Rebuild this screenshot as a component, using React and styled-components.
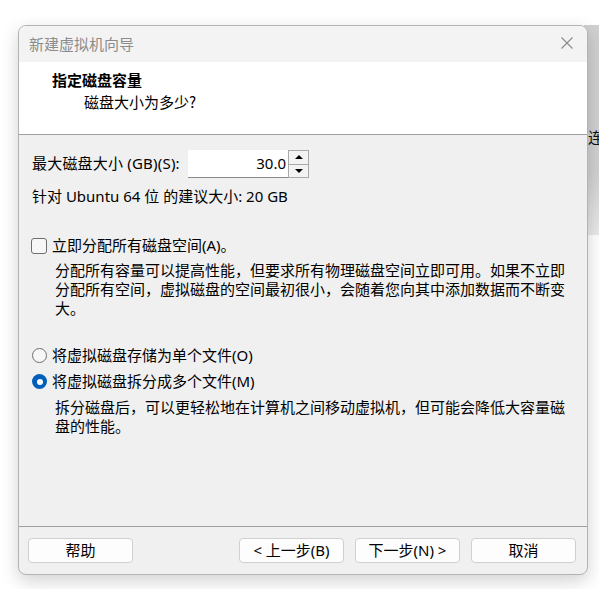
import React from 'react';
import styled, { createGlobalStyle } from 'styled-components';

const GlobalStyle = createGlobalStyle`
  html, body {
    margin: 0;
    padding: 0;
    background: #ffffff;
  }
  body {
    font-family: "Noto Sans", "Noto Sans CJK SC", sans-serif;
    font-size: 15px;
    color: #000;
  }
`;

const Desktop = styled.div`
  position: relative;
  box-sizing: border-box;
  width: 599px;
  height: 589px;
  padding: 25px 0 0 18px;
  overflow: hidden;
`;

const BackWindow = styled.div`
  position: absolute;
  left: 584px;
  top: 25px;
  width: 30px;
  height: 210px;
  background: linear-gradient(#d0d0d0 70%, #e9e9e9);
  font-family: "Noto Sans CJK SC", sans-serif;
  font-size: 15px;
  line-height: 19px;

  span {
    position: absolute;
    left: 4px;
    top: 102px;
    color: #111;
  }
`;

const Dialog = styled.div`
  position: relative;
  z-index: 1;
  box-sizing: border-box;
  width: 570px;
  height: 550px;
  display: flex;
  flex-direction: column;
  border: 1px solid #b3b3b3;
  border-radius: 8px;
  overflow: hidden;
  background: #f0f0f0;
  box-shadow: 0 6px 18px rgba(0, 0, 0, 0.18);
`;

const TitleBar = styled.div`
  height: 36px;
  flex: none;
  display: flex;
  align-items: center;
  justify-content: space-between;
  padding: 0 14px 2px 10px;
  box-sizing: border-box;
  background: #f3f3f3;
  color: #8c8c8c;
  font-family: "Noto Sans CJK SC", sans-serif;
  font-size: 15px;
  line-height: 19px;
`;

const CloseIcon = styled.svg`
  width: 12px;
  height: 12px;
  display: block;
`;

const Header = styled.div`
  height: 72px;
  flex: none;
  box-sizing: border-box;
  padding: 8px 0 0 33px;
  background: #ffffff;
  font-family: "Noto Sans CJK SC", sans-serif;
  line-height: 19px;
`;

const HeaderTitle = styled.div`
  font-weight: 700;
`;

const HeaderSub = styled.div`
  margin: 3px 0 0 32px;
`;

const Divider = styled.div`
  height: 1px;
  flex: none;
  background: #a0a0a0;
`;

const Body = styled.div`
  flex: 1;
  box-sizing: border-box;
  padding: 15px 0 0 12px;
  line-height: 19px;
`;

const SizeRow = styled.div`
  display: flex;
  align-items: center;
  height: 27px;
  padding-left: 1px;
`;

const SizeLabel = styled.span`
  width: 156px;
  letter-spacing: 0.2px;
`;

const Spinner = styled.div`
  display: flex;
  height: 27px;
`;

const SpinInput = styled.div`
  box-sizing: border-box;
  width: 100px;
  height: 28px;
  background: #ffffff;
  border-bottom: 1px solid #8a8a8a;
  padding-right: 2px;
  text-align: right;
  line-height: 27px;
`;

const SpinButtons = styled.div`
  display: flex;
  flex-direction: column;
  box-sizing: border-box;
  width: 21px;
  height: 28px;
  border: 1px solid #a9a9a9;
  background: #f0f0f0;
`;

const SpinButton = styled.div`
  flex: 1;
  display: flex;
  align-items: center;
  justify-content: center;
  border-top: ${p => (p.$bottom ? '1px solid #a9a9a9' : 'none')};
  background: #f3f3f3;

  &::after {
    content: "";
    width: 0;
    height: 0;
    border-left: 4px solid transparent;
    border-right: 4px solid transparent;
    ${p =>
      p.$bottom
        ? 'border-top: 4px solid #000;'
        : 'border-bottom: 4px solid #000;'}
  }
`;

const Hint = styled.div`
  margin: 10px 0 0 1px;
`;

const OptionRow = styled.label`
  display: flex;
  align-items: center;
  gap: 5px;
  margin-top: ${p => p.$top}px;
`;

const CheckBox = styled.span`
  box-sizing: border-box;
  width: 16px;
  height: 16px;
  border: 1px solid #6e6e6e;
  border-radius: 3px;
  background: #f7f7f7;
  flex: none;
`;

const Radio = styled.span`
  box-sizing: border-box;
  width: 15px;
  height: 15px;
  margin-left: 1px;
  border-radius: 50%;
  flex: none;
  display: flex;
  align-items: center;
  justify-content: center;
  border: ${p => (p.$checked ? '0' : '1px solid #6e6e6e')};
  background: ${p => (p.$checked ? '#005fb8' : '#f7f7f7')};

  &::after {
    content: "";
    display: ${p => (p.$checked ? 'block' : 'none')};
    width: 6px;
    height: 6px;
    border-radius: 50%;
    background: #ffffff;
  }
`;

const Note = styled.p`
  margin: ${p => p.$top}px 0 0 24px;
  width: 520px;
  font-family: "Noto Sans CJK SC", sans-serif;
  line-height: 19px;
`;

const Footer = styled.div`
  height: 47px;
  flex: none;
  display: flex;
  align-items: flex-start;
  box-sizing: border-box;
  padding: 11px 11px 0 9px;
`;

const Button = styled.button`
  box-sizing: border-box;
  width: 105px;
  height: 25px;
  margin-left: ${p => p.$gap || 0}px;
  padding: 0;
  border: 1px solid #d0d0d0;
  border-radius: 4px;
  background: #fdfdfd;
  color: #000;
  font-family: "Noto Sans", "Noto Sans CJK SC", sans-serif;
  font-size: 15px;
  line-height: 23px;
`;

const Spacer = styled.div`
  flex: 1;
`;

export default function App() {
  return (
    <>
      <GlobalStyle />
      <Desktop>
        <BackWindow>
          <span>连</span>
        </BackWindow>
        <Dialog>
          <TitleBar>
            <span>新建虚拟机向导</span>
            <CloseIcon viewBox="0 0 12 12">
              <path d="M0.5 0.5 L11.5 11.5 M11.5 0.5 L0.5 11.5" stroke="#8a8a8a" strokeWidth="1.1" fill="none" />
            </CloseIcon>
          </TitleBar>
          <Header>
            <HeaderTitle>指定磁盘容量</HeaderTitle>
            <HeaderSub>磁盘大小为多少?</HeaderSub>
          </Header>
          <Divider />
          <Body>
            <SizeRow>
              <SizeLabel>最大磁盘大小 (GB)(S):</SizeLabel>
              <Spinner>
                <SpinInput>30.0</SpinInput>
                <SpinButtons>
                  <SpinButton />
                  <SpinButton $bottom />
                </SpinButtons>
              </Spinner>
            </SizeRow>
            <Hint>针对 Ubuntu 64 位 的建议大小: 20 GB</Hint>

            <OptionRow $top={30}>
              <CheckBox />
              <span>立即分配所有磁盘空间(A)。</span>
            </OptionRow>
            <Note $top={5}>
              分配所有容量可以提高性能，但要求所有物理磁盘空间立即可用。如果不立即分配所有空间，虚拟磁盘的空间最初很小，会随着您向其中添加数据而不断变大。
            </Note>

            <OptionRow $top={29}>
              <Radio />
              <span>将虚拟磁盘存储为单个文件(O)</span>
            </OptionRow>
            <OptionRow $top={7}>
              <Radio $checked />
              <span>将虚拟磁盘拆分成多个文件(M)</span>
            </OptionRow>
            <Note $top={6}>
              拆分磁盘后，可以更轻松地在计算机之间移动虚拟机，但可能会降低大容量磁盘的性能。
            </Note>
          </Body>
          <Divider />
          <Footer>
            <Button>帮助</Button>
            <Spacer />
            <Button>&lt; 上一步(B)</Button>
            <Button $gap={11}>下一步(N) &gt;</Button>
            <Button $gap={11}>取消</Button>
          </Footer>
        </Dialog>
      </Desktop>
    </>
  );
}
